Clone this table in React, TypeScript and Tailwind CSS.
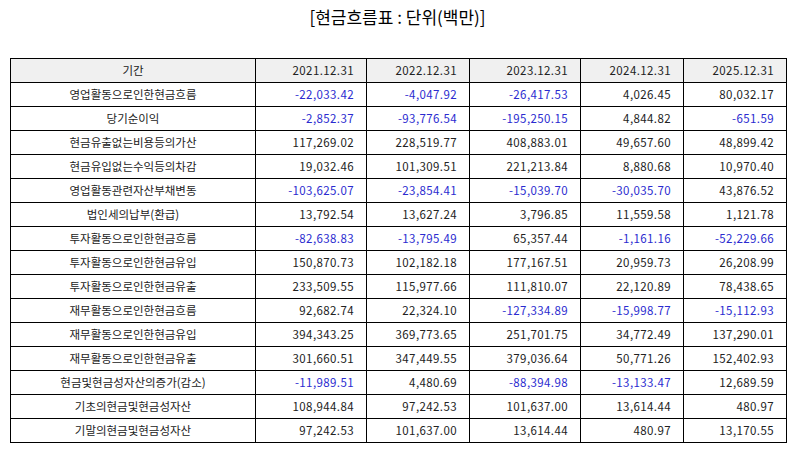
import React from 'react';

type Row = { label: string; values: string[] };

const YEARS = ['2021.12.31', '2022.12.31', '2023.12.31', '2024.12.31', '2025.12.31'];

const ROWS: Row[] = [
  { label: '영업활동으로인한현금흐름', values: ['-22,033.42', '-4,047.92', '-26,417.53', '4,026.45', '80,032.17'] },
  { label: '당기순이익', values: ['-2,852.37', '-93,776.54', '-195,250.15', '4,844.82', '-651.59'] },
  { label: '현금유출없는비용등의가산', values: ['117,269.02', '228,519.77', '408,883.01', '49,657.60', '48,899.42'] },
  { label: '현금유입없는수익등의차감', values: ['19,032.46', '101,309.51', '221,213.84', '8,880.68', '10,970.40'] },
  { label: '영업활동관련자산부채변동', values: ['-103,625.07', '-23,854.41', '-15,039.70', '-30,035.70', '43,876.52'] },
  { label: '법인세의납부(환급)', values: ['13,792.54', '13,627.24', '3,796.85', '11,559.58', '1,121.78'] },
  { label: '투자활동으로인한현금흐름', values: ['-82,638.83', '-13,795.49', '65,357.44', '-1,161.16', '-52,229.66'] },
  { label: '투자활동으로인한현금유입', values: ['150,870.73', '102,182.18', '177,167.51', '20,959.73', '26,208.99'] },
  { label: '투자활동으로인한현금유출', values: ['233,509.55', '115,977.66', '111,810.07', '22,120.89', '78,438.65'] },
  { label: '재무활동으로인한현금흐름', values: ['92,682.74', '22,324.10', '-127,334.89', '-15,998.77', '-15,112.93'] },
  { label: '재무활동으로인한현금유입', values: ['394,343.25', '369,773.65', '251,701.75', '34,772.49', '137,290.01'] },
  { label: '재무활동으로인한현금유출', values: ['301,660.51', '347,449.55', '379,036.64', '50,771.26', '152,402.93'] },
  { label: '현금및현금성자산의증가(감소)', values: ['-11,989.51', '4,480.69', '-88,394.98', '-13,133.47', '12,689.59'] },
  { label: '기초의현금및현금성자산', values: ['108,944.84', '97,242.53', '101,637.00', '13,614.44', '480.97'] },
  { label: '기말의현금및현금성자산', values: ['97,242.53', '101,637.00', '13,614.44', '480.97', '13,170.55'] },
];

const App: React.FC = () => {
  return (
    <div
      className="w-[795px] h-[452px] bg-white text-[#222]"
      style={{ fontFamily: '"Noto Sans CJK KR", "Noto Sans", sans-serif' }}
    >
      <h1 className="pt-[5px] h-[58px] text-center text-[17px] leading-[24px] font-normal text-black">
        [현금흐름표 : 단위(백만)]
      </h1>
      <div className="px-[10px]">
        <table className="w-[776px] table-fixed border-collapse text-[11.5px] leading-none">
          <colgroup>
            <col className="w-[245px]" />
            <col className="w-[111px]" />
            <col className="w-[103px]" />
            <col className="w-[111px]" />
            <col className="w-[103px]" />
            <col className="w-[103px]" />
          </colgroup>
          <thead>
            <tr className="h-[24px] bg-[#f0f0f0]">
              <th className="border border-black font-normal text-center">기간</th>
              {YEARS.map((y) => (
                <th key={y} className="border border-black font-normal text-right pr-3 tracking-[0.4px]">
                  {y}
                </th>
              ))}
            </tr>
          </thead>
          <tbody>
            {ROWS.map((row) => (
              <tr key={row.label} className="h-[24px]">
                <td className="border border-black text-center">{row.label}</td>
                {row.values.map((v, i) => (
                  <td
                    key={i}
                    className={`border border-black text-right pr-3 tracking-[0.4px] ${v.startsWith('-') ? 'text-[#2b2bd0]' : ''}`}
                  >
                    {v}
                  </td>
                ))}
              </tr>
            ))}
          </tbody>
        </table>
      </div>
    </div>
  );
};

export default App;
